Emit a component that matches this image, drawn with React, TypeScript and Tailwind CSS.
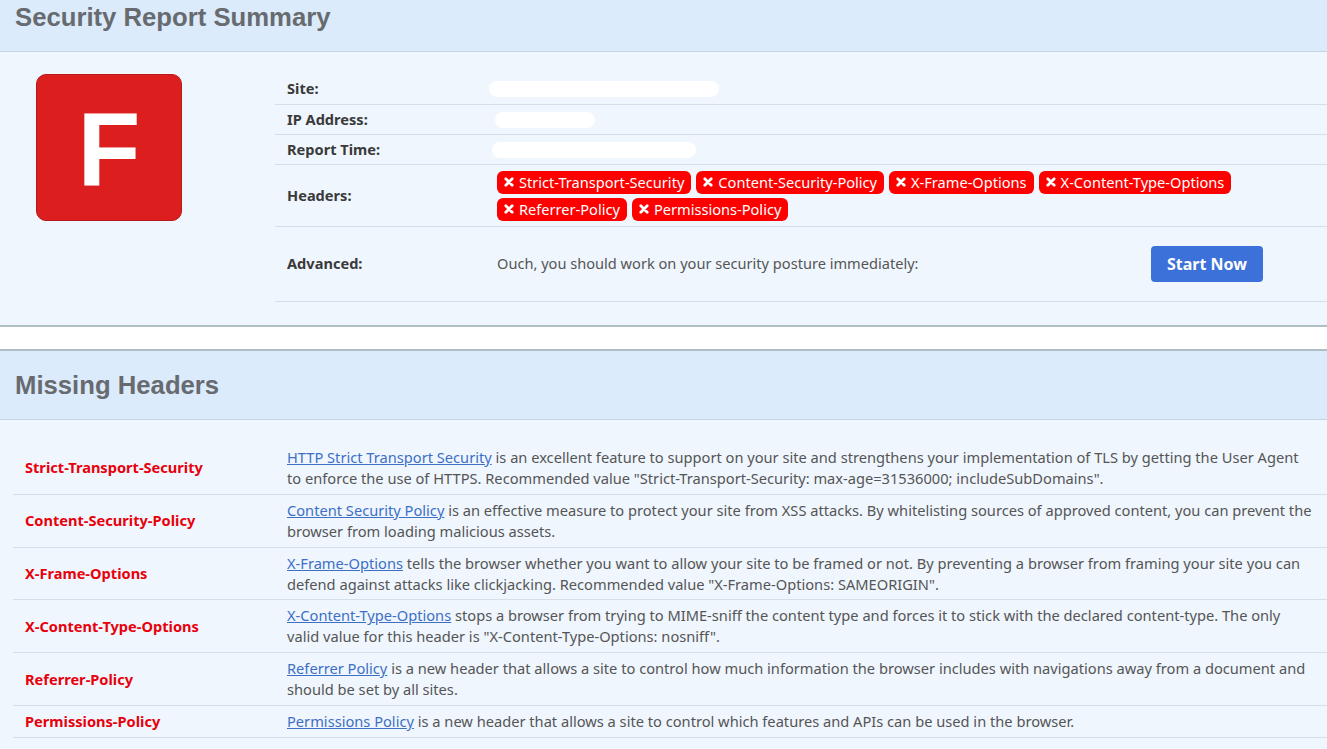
import React from "react";

const badges = [
  "Strict-Transport-Security",
  "Content-Security-Policy",
  "X-Frame-Options",
  "X-Content-Type-Options",
  "Referrer-Policy",
  "Permissions-Policy",
];

const missing: { name: string; link: string; text: string }[] = [
  {
    name: "Strict-Transport-Security",
    link: "HTTP Strict Transport Security",
    text: ' is an excellent feature to support on your site and strengthens your implementation of TLS by getting the User Agent to enforce the use of HTTPS. Recommended value "Strict-Transport-Security: max-age=31536000; includeSubDomains".',
  },
  {
    name: "Content-Security-Policy",
    link: "Content Security Policy",
    text: " is an effective measure to protect your site from XSS attacks. By whitelisting sources of approved content, you can prevent the browser from loading malicious assets.",
  },
  {
    name: "X-Frame-Options",
    link: "X-Frame-Options",
    text: ' tells the browser whether you want to allow your site to be framed or not. By preventing a browser from framing your site you can defend against attacks like clickjacking. Recommended value "X-Frame-Options: SAMEORIGIN".',
  },
  {
    name: "X-Content-Type-Options",
    link: "X-Content-Type-Options",
    text: ' stops a browser from trying to MIME-sniff the content type and forces it to stick with the declared content-type. The only valid value for this header is "X-Content-Type-Options: nosniff".',
  },
  {
    name: "Referrer-Policy",
    link: "Referrer Policy",
    text: " is a new header that allows a site to control how much information the browser includes with navigations away from a document and should be set by all sites.",
  },
  {
    name: "Permissions-Policy",
    link: "Permissions Policy",
    text: " is a new header that allows a site to control which features and APIs can be used in the browser.",
  },
];

function XIcon() {
  return (
    <svg width="10" height="10" viewBox="0 0 10 10" className="shrink-0">
      <path d="M1.8 1.8 L8.2 8.2 M8.2 1.8 L1.8 8.2" stroke="white" strokeWidth="2.8" strokeLinecap="round" />
    </svg>
  );
}

function InfoRow({ label, children, h }: { label: string; children: React.ReactNode; h: string }) {
  return (
    <div className={`flex items-center border-b border-[#d6dfe8] ${h}`}>
      <div className="w-[210px] shrink-0 pl-3 text-[14.6px] font-bold text-[#3a3a3a]">{label}</div>
      <div className="flex-1 min-w-0">{children}</div>
    </div>
  );
}

export default function App() {
  return (
    <div className="w-[1327px] min-h-[749px] bg-white text-[#555]" style={{ fontFamily: '"Noto Sans", sans-serif' }}>
      {/* Section 1 */}
      <div className="border-b-2 border-[#aebfc5]">
        <div className="h-[52px] bg-[#dbebfb] border-b border-[#c4d3df] pl-[15px] pt-[3px]">
          <h1 className="text-[25.7px] leading-[28px] font-bold text-[#676a6e]" style={{ fontFamily: '"Liberation Sans", Arial, sans-serif' }}>
            Security Report Summary
          </h1>
        </div>
        <div className="h-[273px] bg-[#eff6fe] flex pt-[22px]">
          <div className="w-[275px] shrink-0 pl-[36px]">
            <div className="w-[146px] h-[147px] rounded-[10px] bg-[#dc1e1e] border border-[#b5191a] flex items-center justify-center">
              <span className="text-white text-[103px] font-bold leading-none mt-[4px]" style={{ fontFamily: '"Liberation Sans", Arial, sans-serif' }}>
                F
              </span>
            </div>
          </div>
          <div className="flex-1">
            <InfoRow label="Site:" h="h-[31px]">
              <div className="ml-[4px] w-[230px] h-[16px] rounded-full bg-white" />
            </InfoRow>
            <InfoRow label="IP Address:" h="h-[30px]">
              <div className="ml-[10px] w-[100px] h-[16px] rounded-full bg-white" />
            </InfoRow>
            <InfoRow label="Report Time:" h="h-[30px]">
              <div className="ml-[7px] w-[204px] h-[16px] rounded-full bg-white" />
            </InfoRow>
            <InfoRow label="Headers:" h="h-[62px]">
              <div className="flex flex-wrap gap-x-[5px] gap-y-[4px] pl-[12px] pr-[60px]">
                {badges.map((b) => (
                  <span key={b} className="inline-flex items-center gap-[5px] h-[23px] px-[7px] rounded-[6px] bg-[#fe0000] text-white text-[14.6px] leading-none">
                    <XIcon />
                    {b}
                  </span>
                ))}
              </div>
            </InfoRow>
            <InfoRow label="Advanced:" h="h-[75px]">
              <div className="flex items-center pl-[12px]">
                <span className="text-[14.6px] text-[#555] w-[654px]">Ouch, you should work on your security posture immediately:</span>
                <button className="w-[112px] h-[36px] rounded-[4px] bg-[#3b71d8] text-white text-[16px] font-bold">Start Now</button>
              </div>
            </InfoRow>
          </div>
        </div>
      </div>

      <div className="h-[22px] bg-white" />

      {/* Section 2 */}
      <div className="border-t-2 border-[#aebfc5]">
        <div className="h-[69px] bg-[#dbebfb] border-b border-[#c4d3df] pl-[15px] flex items-center">
          <h2 className="text-[25.7px] leading-[28px] font-bold text-[#676a6e]" style={{ fontFamily: '"Liberation Sans", Arial, sans-serif' }}>
            Missing Headers
          </h2>
        </div>
        <div className="bg-[#eff6fe] pt-[22px] pb-[14px] pl-[13px]">
          {missing.map((m) => (
            <div key={m.name} className="flex items-center border-b border-[#d6dfe8] py-[5px]">
              <div className="w-[262px] shrink-0 pl-3 text-[14.6px] leading-[19px] font-bold text-[#e8000b]">{m.name}</div>
              <div className="flex-1 min-w-0 pl-3 pr-[15px] text-[14.65px] leading-[20.9px] text-[#555]">
                <a className="text-[#3d6fc6] underline" href="#">
                  {m.link}
                </a>
                {m.text}
              </div>
            </div>
          ))}
        </div>
      </div>
    </div>
  );
}
